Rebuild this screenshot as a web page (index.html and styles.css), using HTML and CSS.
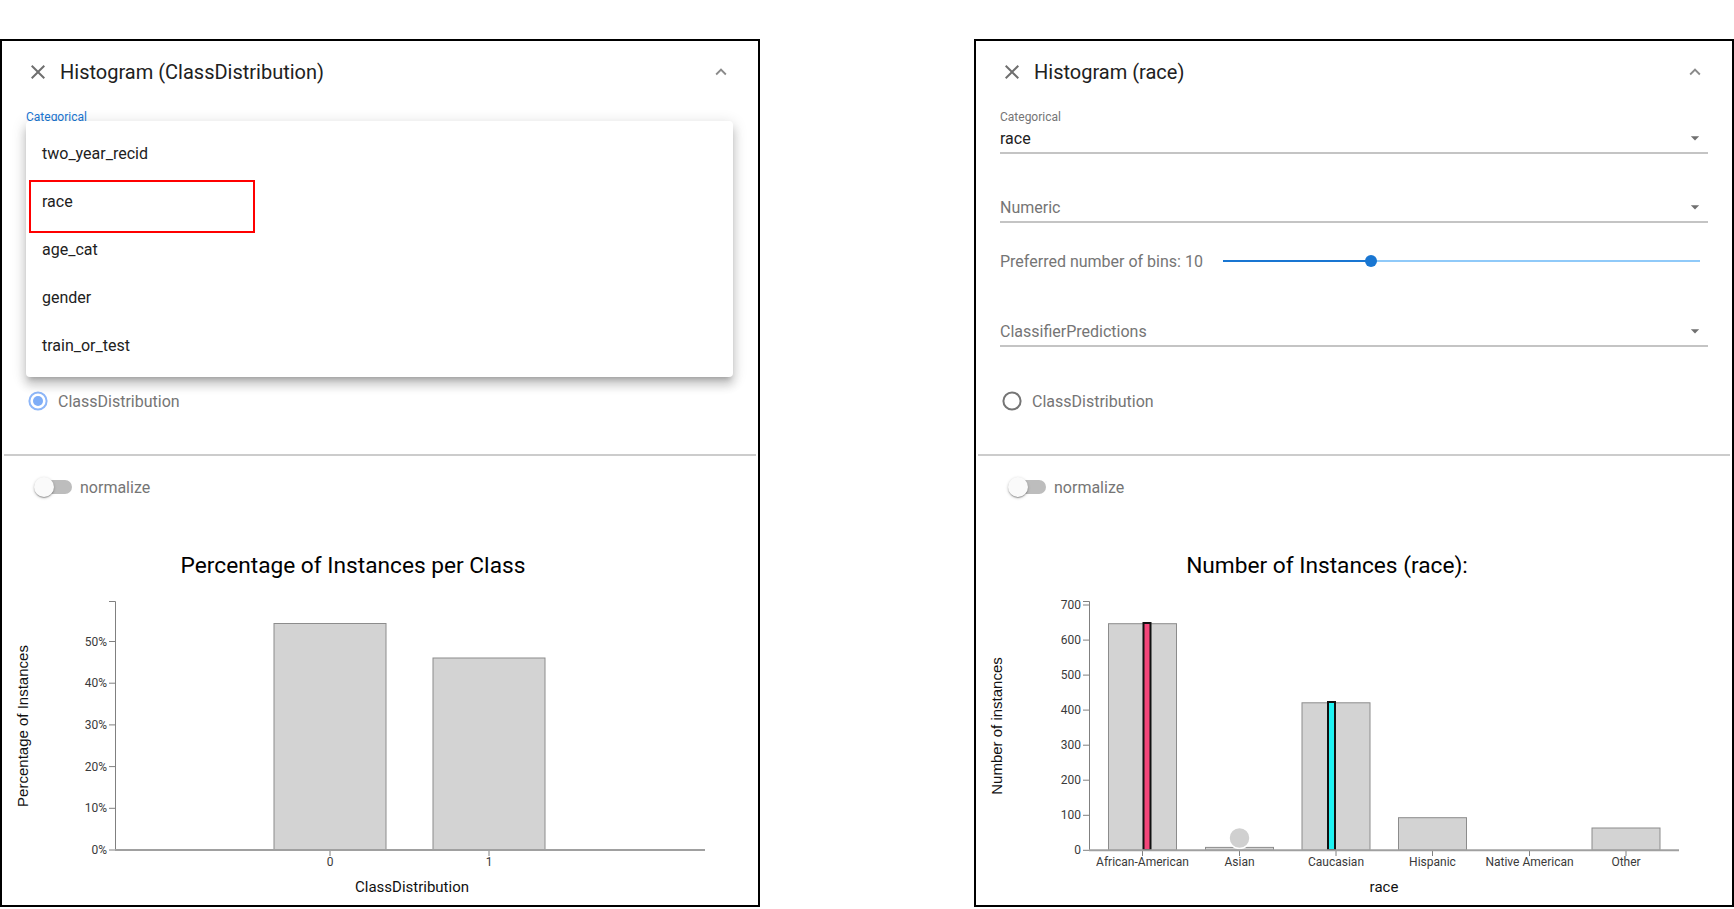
FILE: index.html
```html
<!DOCTYPE html>
<html lang="en">
<head>
<meta charset="utf-8">
<title>Histograms</title>
<link rel="stylesheet" href="styles.css">
</head>
<body>
<div class="page">

  <section class="panel">
    <header class="panel-head">
      <svg class="icon-close" viewBox="0 0 24 24"><path d="M19 6.41L17.59 5 12 10.59 6.41 5 5 6.41 10.59 12 5 17.59 6.41 19 12 13.41 17.59 19 19 17.59 13.41 12z"/></svg>
      <h2 class="panel-title">Histogram (ClassDistribution)</h2>
      <svg class="icon-chevron" viewBox="0 0 24 24"><path d="M12 8l-6 6 1.41 1.41L12 10.83l4.59 4.58L18 14z"/></svg>
    </header>
    <div class="form">
      <div class="field field-cat">
        <span class="field-label focused">Categorical</span>
        <div class="select open"></div>
      </div>
      <div class="covered"></div>
      <div class="radio-row">
        <svg class="radio" viewBox="0 0 20 20"><circle class="radio-ring checked" cx="10" cy="10" r="8.6"/><circle class="radio-dot" cx="10" cy="10" r="5"/></svg>
        <span class="radio-label">ClassDistribution</span>
      </div>
    </div>
    <div class="menu">
      <div class="menu-item">two_year_recid</div>
      <div class="menu-item">race</div>
      <div class="menu-item">age_cat</div>
      <div class="menu-item">gender</div>
      <div class="menu-item">train_or_test</div>
      <div class="menu-highlight"></div>
    </div>
    <div class="divider"></div>
    <div class="toggle-row">
      <div class="switch"><div class="switch-track"></div><div class="switch-thumb"></div></div>
      <span class="toggle-label">normalize</span>
    </div>
    <div class="chart-title">Percentage of Instances per Class</div>
    <svg class="chart" width="756" height="325" viewBox="0 0 756 325">
      <rect class="bar" x="272" y="43.5" width="112" height="226.5"/>
      <rect class="bar" x="431" y="78" width="112" height="192"/>
      <path class="axis-y" d="M107,21.5H113.5V270"/>
      <g class="ticks">
        <line x1="107" x2="113" y1="270" y2="270"/>
        <line x1="107" x2="113" y1="228.3" y2="228.3"/>
        <line x1="107" x2="113" y1="186.6" y2="186.6"/>
        <line x1="107" x2="113" y1="144.9" y2="144.9"/>
        <line x1="107" x2="113" y1="103.2" y2="103.2"/>
        <line x1="107" x2="113" y1="61.5" y2="61.5"/>
        <line x1="328" x2="328" y1="270" y2="276"/>
        <line x1="487" x2="487" y1="270" y2="276"/>
      </g>
      <line class="axis-x" x1="113" x2="703" y1="270" y2="270"/>
      <g class="tick-labels-y">
        <text x="105" y="274">0%</text>
        <text x="105" y="232.3">10%</text>
        <text x="105" y="190.6">20%</text>
        <text x="105" y="148.9">30%</text>
        <text x="105" y="107.2">40%</text>
        <text x="105" y="65.5">50%</text>
      </g>
      <g class="tick-labels-x">
        <text x="328" y="285.5">0</text>
        <text x="487" y="285.5">1</text>
      </g>
      <text class="x-label" x="410" y="312">ClassDistribution</text>
      <text class="y-label" transform="translate(26,146) rotate(-90)">Percentage of Instances</text>
    </svg>
  </section>

  <section class="panel">
    <header class="panel-head">
      <svg class="icon-close" viewBox="0 0 24 24"><path d="M19 6.41L17.59 5 12 10.59 6.41 5 5 6.41 10.59 12 5 17.59 6.41 19 12 13.41 17.59 19 19 17.59 13.41 12z"/></svg>
      <h2 class="panel-title">Histogram (race)</h2>
      <svg class="icon-chevron" viewBox="0 0 24 24"><path d="M12 8l-6 6 1.41 1.41L12 10.83l4.59 4.58L18 14z"/></svg>
    </header>
    <div class="form">
      <div class="field field-cat">
        <span class="field-label">Categorical</span>
        <div class="select"><span class="select-value">race</span><svg class="icon-drop" viewBox="0 0 24 24"><path d="M7 10l5 5 5-5z"/></svg></div>
      </div>
      <div class="field field-num">
        <div class="select"><span class="select-value placeholder">Numeric</span><svg class="icon-drop" viewBox="0 0 24 24"><path d="M7 10l5 5 5-5z"/></svg></div>
      </div>
      <div class="bins-row">
        <span class="bins-label">Preferred number of bins: 10</span>
        <div class="slider"><div class="slider-track"></div><div class="slider-fill" style="width:31.1%"></div><div class="slider-thumb" style="left:31.1%"></div></div>
      </div>
      <div class="field field-cls">
        <div class="select"><span class="select-value placeholder">ClassifierPredictions</span><svg class="icon-drop" viewBox="0 0 24 24"><path d="M7 10l5 5 5-5z"/></svg></div>
      </div>
      <div class="radio-row">
        <svg class="radio" viewBox="0 0 20 20"><circle class="radio-ring" cx="10" cy="10" r="8.6"/></svg>
        <span class="radio-label">ClassDistribution</span>
      </div>
    </div>
    <div class="divider"></div>
    <div class="toggle-row">
      <div class="switch"><div class="switch-track"></div><div class="switch-thumb"></div></div>
      <span class="toggle-label">normalize</span>
    </div>
    <div class="chart-title">Number of Instances (race):</div>
    <svg class="chart" width="756" height="325" viewBox="0 0 756 325">
      <rect class="bar" x="132.5" y="43.7" width="68" height="226.6"/>
      <rect class="bar" x="229.5" y="267.4" width="68" height="2.9"/>
      <rect class="bar" x="326" y="122.8" width="68" height="147.5"/>
      <rect class="bar" x="422.5" y="237.7" width="68" height="32.6"/>
      <rect class="bar" x="616" y="248" width="68" height="22.3"/>
      <circle class="blob" cx="263.5" cy="258" r="10.5"/>
      <rect class="pred pred-pink" x="167.5" y="43" width="7" height="227"/>
      <rect class="pred pred-cyan" x="352" y="122" width="7" height="148"/>
      <path class="axis-y" d="M107,21.5H113.5V270"/>
      <g class="ticks">
        <line x1="107" x2="113" y1="270.3" y2="270.3"/>
        <line x1="107" x2="113" y1="235.3" y2="235.3"/>
        <line x1="107" x2="113" y1="200.2" y2="200.2"/>
        <line x1="107" x2="113" y1="165.2" y2="165.2"/>
        <line x1="107" x2="113" y1="130.1" y2="130.1"/>
        <line x1="107" x2="113" y1="95.1" y2="95.1"/>
        <line x1="107" x2="113" y1="60.1" y2="60.1"/>
        <line x1="107" x2="113" y1="25" y2="25"/>
        <line x1="166.5" x2="166.5" y1="270" y2="276"/>
        <line x1="263.5" x2="263.5" y1="270" y2="276"/>
        <line x1="360" x2="360" y1="270" y2="276"/>
        <line x1="456.5" x2="456.5" y1="270" y2="276"/>
        <line x1="553.5" x2="553.5" y1="270" y2="276"/>
        <line x1="650" x2="650" y1="270" y2="276"/>
      </g>
      <line class="axis-x" x1="113" x2="703" y1="270.3" y2="270.3"/>
      <g class="tick-labels-y">
        <text x="105" y="274.3">0</text>
        <text x="105" y="239.3">100</text>
        <text x="105" y="204.2">200</text>
        <text x="105" y="169.2">300</text>
        <text x="105" y="134.1">400</text>
        <text x="105" y="99.1">500</text>
        <text x="105" y="64.1">600</text>
        <text x="105" y="29">700</text>
      </g>
      <g class="tick-labels-x">
        <text x="166.5" y="285.5">African-American</text>
        <text x="263.5" y="285.5">Asian</text>
        <text x="360" y="285.5">Caucasian</text>
        <text x="456.5" y="285.5">Hispanic</text>
        <text x="553.5" y="285.5">Native American</text>
        <text x="650" y="285.5">Other</text>
      </g>
      <text class="x-label" x="408" y="312">race</text>
      <text class="y-label" transform="translate(26,146) rotate(-90)">Number of instances</text>
    </svg>
  </section>

</div>
</body>
</html>
```

FILE: styles.css
```css
* {
  box-sizing: border-box;
}

html, body {
  margin: 0;
  background: #ffffff;
}

body {
  font-family: Roboto, "Noto Sans", "Liberation Sans", Arial, sans-serif;
  color: #212121;
}

.page {
  display: flex;
  gap: 214px;
  padding-top: 39px;
  height: 909px;
  overflow: hidden;
}

.panel {
  position: relative;
  flex: none;
  width: 760px;
  height: 868px;
  border: 2px solid #000000;
  background: #ffffff;
  display: flex;
  flex-direction: column;
}

/* header */
.panel-head {
  flex: none;
  height: 62px;
  display: flex;
  align-items: center;
  padding: 0 26px 0 24px;
}

.icon-close {
  flex: none;
  width: 24px;
  height: 24px;
  fill: #6f6f6f;
}

.panel-title {
  margin: 0 0 0 10px;
  font-size: 20px;
  font-weight: 400;
  line-height: 24px;
  color: #212121;
}

.icon-chevron {
  flex: none;
  margin-left: auto;
  width: 22px;
  height: 22px;
  fill: #8a8a8a;
}

/* form */
.form {
  padding: 0 24px;
}

.field-cat {
  margin-top: 7px;
}

.field-num {
  margin-top: 39px;
}

.field-cls {
  margin-top: 42px;
}

.covered {
  height: 193px;
}

.field-label {
  display: block;
  font-size: 12px;
  line-height: 14px;
  color: #757575;
}

.field-label.focused {
  color: #1976d2;
}

.select {
  height: 30px;
  display: flex;
  align-items: center;
  border-bottom: 2px solid #c4c4c4;
}

.select.open {
  border-bottom-color: transparent;
}

.select-value {
  flex: 1;
  font-size: 16px;
  line-height: 19px;
  color: #212121;
}

.select-value.placeholder {
  color: #757575;
}

.icon-drop {
  flex: none;
  width: 20px;
  height: 20px;
  margin-right: 3px;
  fill: #707070;
}

/* slider */
.bins-row {
  margin-top: 24px;
  height: 28px;
  display: flex;
  align-items: center;
}

.bins-label {
  flex: none;
  font-size: 16px;
  line-height: 19px;
  color: #757575;
}

.slider {
  position: relative;
  flex: 1;
  height: 12px;
  margin-left: 20px;
  margin-right: 8px;
}

.slider-track {
  position: absolute;
  left: 0;
  right: 0;
  top: 5px;
  height: 2px;
  background: #90caf9;
}

.slider-fill {
  position: absolute;
  left: 0;
  top: 5px;
  height: 2px;
  background: #1976d2;
}

.slider-thumb {
  position: absolute;
  top: 0;
  width: 12px;
  height: 12px;
  margin-left: -6px;
  border-radius: 50%;
  background: #1976d2;
}

/* radio */
.radio-row {
  margin-top: 40px;
  height: 28px;
  display: flex;
  align-items: center;
  padding-left: 2px;
}

.radio {
  flex: none;
  width: 20px;
  height: 20px;
}

.radio-ring {
  fill: none;
  stroke: #757575;
  stroke-width: 2;
}

.radio-ring.checked {
  stroke: #8db6f8;
}

.radio-dot {
  fill: #7eadf7;
}

.radio-label {
  margin-left: 10px;
  font-size: 16px;
  line-height: 19px;
  color: #757575;
}

/* dropdown menu */
.menu {
  position: absolute;
  top: 80px;
  left: 24px;
  width: 707px;
  padding: 9px 0 7px;
  background: #ffffff;
  border-radius: 4px;
  box-shadow: 0 5px 5px -3px rgba(0, 0, 0, 0.2), 0 8px 10px 1px rgba(0, 0, 0, 0.14), 0 3px 14px 2px rgba(0, 0, 0, 0.12);
  z-index: 5;
}

.menu-item {
  height: 48px;
  line-height: 48px;
  padding-left: 16px;
  font-size: 16px;
  color: #212121;
}

.menu-highlight {
  position: absolute;
  left: 3px;
  top: 59px;
  width: 226px;
  height: 53px;
  border: 2px solid #ff0000;
}

/* divider */
.divider {
  flex: none;
  margin: 39px 2px 0;
  height: 2px;
  background: #cccccc;
}

/* toggle */
.toggle-row {
  flex: none;
  margin-top: 17px;
  height: 28px;
  display: flex;
  align-items: center;
  padding-left: 32px;
}

.switch {
  position: relative;
  flex: none;
  width: 40px;
  height: 20px;
}

.switch-track {
  position: absolute;
  left: 3px;
  top: 3px;
  width: 35px;
  height: 14px;
  border-radius: 7px;
  background: #bdbdbd;
}

.switch-thumb {
  position: absolute;
  left: 0;
  top: 0;
  width: 20px;
  height: 20px;
  border-radius: 50%;
  background: #fafafa;
  box-shadow: 0 1px 3px rgba(0, 0, 0, 0.25), 0 1px 1px rgba(0, 0, 0, 0.16), 0 2px 1px -1px rgba(0, 0, 0, 0.12);
}

.toggle-label {
  margin-left: 6px;
  font-size: 16px;
  line-height: 19px;
  color: #757575;
}

/* chart */
.chart-title {
  flex: none;
  margin-top: 51px;
  height: 28px;
  line-height: 28px;
  padding-right: 54px;
  text-align: center;
  font-size: 22.7px;
  color: #000000;
}

.chart {
  display: block;
  flex: none;
}

.bar {
  fill: #d3d3d3;
  stroke: #8c8c8c;
  stroke-width: 1;
}

.blob {
  fill: #d0d0d0;
  stroke: #ffffff;
  stroke-width: 1.5;
}

.pred {
  stroke: #111111;
  stroke-width: 2;
}

.pred-pink {
  fill: #f4467a;
}

.pred-cyan {
  fill: #1ff2f2;
}

.axis-y {
  fill: none;
  stroke: #808080;
  stroke-width: 1;
}

.axis-x {
  stroke: #a0a0a0;
  stroke-width: 2;
}

.ticks line {
  stroke: #808080;
  stroke-width: 1;
}

.tick-labels-y text,
.tick-labels-x text {
  font-family: Roboto, "Noto Sans", sans-serif;
  font-size: 12px;
  fill: #3a3a3a;
}

.tick-labels-y text {
  text-anchor: end;
}

.tick-labels-x text {
  text-anchor: middle;
}

.x-label {
  font-family: Roboto, "Noto Sans", sans-serif;
  font-size: 15px;
  fill: #111111;
  text-anchor: middle;
}

.y-label {
  font-family: "Liberation Sans", Arial, sans-serif;
  font-size: 15px;
  fill: #111111;
  text-anchor: middle;
}
```
